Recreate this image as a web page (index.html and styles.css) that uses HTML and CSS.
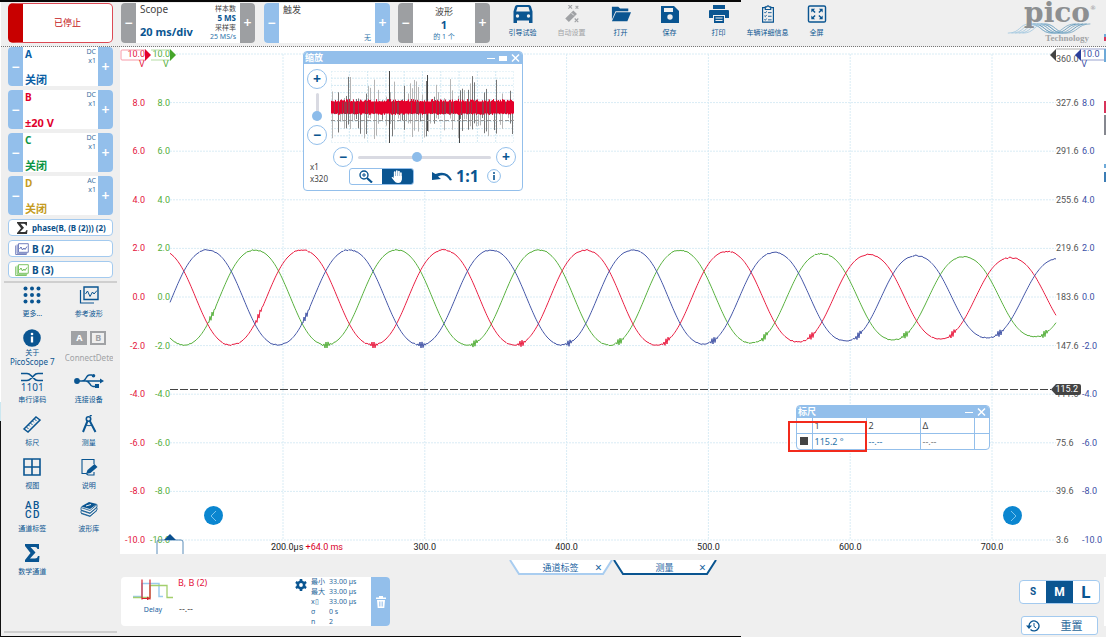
FILE: index.html
```html
<!DOCTYPE html>
<html lang="zh-CN">
<head>
<meta charset="utf-8">
<title>PicoScope 7</title>
<link rel="stylesheet" href="styles.css">
</head>
<body>
<div class="app">
  <header class="toolbar">
    <button class="run-state">已停止</button>
    <section class="stepper stepper-gray timebase">
      <button aria-label="减小时基">−</button>
      <div class="stepper-body split">
        <div class="col"><span class="cap">Scope</span><b class="big">20 ms/div</b></div>
        <div class="col samples"><span>样本数</span><b>5 MS</b><span>采样率</span><span class="blue">25 MS/s</span></div>
      </div>
      <button aria-label="增大时基">+</button>
    </section>
    <section class="stepper trigger">
      <button aria-label="上一触发">−</button>
      <div class="stepper-body col"><span class="cap cjk">触发</span><span class="note">无</span></div>
      <button aria-label="下一触发">+</button>
    </section>
    <section class="stepper stepper-gray waveform">
      <button aria-label="上一波形">−</button>
      <div class="stepper-body col center"><span class="cap cjk">波形</span><b class="big">1</b><span class="tiny">的 1 个</span></div>
      <button aria-label="下一波形">+</button>
    </section>
    <nav class="actions">
      <button class="tool"><svg viewBox="0 0 20 18"><path d="M4 0h12q1.500 0 2 1.500l1.500 5V18h-3.500v-2.500H4V18H.500V6.500L2 1.500Q2.500 0 4 0zM4.500 2 3.200 6.500h13.600L15.500 2z" fill="currentColor" fill-rule="evenodd"/><circle cx="4.500" cy="11" r="1.700" fill="#efefef"/><circle cx="15.500" cy="11" r="1.700" fill="#efefef"/></svg>引导试验</button>
      <button class="tool off"><svg viewBox="0 0 20 20"><path d="m2.500 15 9-9 4 4-9 9z" fill="currentColor"/><path d="m9.500 9 2.500 2.500" stroke="#efefef"/><path d="m6 0 4 4m0-4L6 4m8-3 3 3m0-3-3 3m-1 11 4 4m0-4-4 4" stroke="currentColor" stroke-width="1.200"/></svg>自动设置</button>
      <button class="tool"><svg viewBox="0 0 22 18"><path d="M1 1h7l2 2h9v3H5L1 15z" fill="currentColor"/><path d="M5.500 7H22l-4 10H1z" fill="currentColor"/></svg>打开</button>
      <button class="tool"><svg viewBox="0 0 18 18"><path d="M0 1h13l5 5v12H0z" fill="currentColor"/><path d="M3 3h9v4H3z" fill="#efefef"/><circle cx="9" cy="12" r="2.700" fill="#efefef"/></svg>保存</button>
      <button class="tool"><svg viewBox="0 0 20 18"><path d="M4 0h12v4H4zM1 5h18q1 0 1 1v7h-4v-3H4v3H0V6q0-1 1-1zM5 11h10v7H5z" fill="currentColor"/><path d="M6.500 13h7m-7 2.500h7" stroke="#efefef"/></svg>打印</button>
      <button class="tool"><svg viewBox="0 0 16 20"><path d="M5 3H2v16h12V3h-3M5 2h1.500q1.500-2 3 0H11v3H5z" fill="none" stroke="currentColor" stroke-width="1.300"/><path d="m4 8 1 1 1.500-2M4 12l1 1 1.500-2M4 16l1 1 1.500-2M8 8.500h4m-4 4h4m-4 4h4" fill="none" stroke="currentColor"/></svg>车辆详细信息</button>
      <button class="tool"><svg viewBox="0 0 20 19"><rect x="1" y="1" width="18" height="17" rx="1.500" fill="none" stroke="currentColor" stroke-width="1.500"/><path d="M4 4h4L4 8zm12 0v4l-4-4zM4 15v-4l4 4zm12 0h-4l4-4z" fill="currentColor"/><path d="m5 5 3 3m7-3-3 3M5 14l3-3m7 3-3-3" stroke="currentColor" stroke-width="1.500"/></svg>全屏</button>
    </nav>
    <div class="logo">
      <span class="logo-name">pico<sup>®</sup></span>
      <svg viewBox="0 0 92 12" fill="none" stroke-width="1" id="logo-waves"></svg>
      <span class="logo-sub">Technology</span>
    </div>
  </header>

  <aside class="sidebar">
    <section class="stepper channel ch-a"><button aria-label="A 减">−</button><div class="stepper-body split"><div class="col"><b>A</b><b class="range">关闭</b></div><div class="col coupling"><span>DC</span><span>x1</span></div></div><button aria-label="A 加">+</button></section>
    <section class="stepper channel ch-b"><button aria-label="B 减">−</button><div class="stepper-body split"><div class="col"><b>B</b><b class="range">±20 V</b></div><div class="col coupling"><span>DC</span><span>x1</span></div></div><button aria-label="B 加">+</button></section>
    <section class="stepper channel ch-c"><button aria-label="C 减">−</button><div class="stepper-body split"><div class="col"><b>C</b><b class="range">关闭</b></div><div class="col coupling"><span>DC</span><span>x1</span></div></div><button aria-label="C 加">+</button></section>
    <section class="stepper channel ch-d"><button aria-label="D 减">−</button><div class="stepper-body split"><div class="col"><b>D</b><b class="range">关闭</b></div><div class="col coupling"><span>AC</span><span>x1</span></div></div><button aria-label="D 加">+</button></section>
    <button class="pill pill-math"><svg viewBox="0 0 12 12"><path d="M1 0h10v3.500h-1Q9.500 1.800 8 1.800H4.500L8 5.800 4 10h4.500q1.500 0 2-2h1L11 12H1v-1l4-4.800L1 1z" fill="#333"/></svg>phase(B, (B (2))) (2)</button>
    <button class="pill"><svg class="violet" viewBox="0 0 14 12"><path d="M3.500.700h9.800v8.600H3.500zM.700 2.500v9h11M2.200 1.500v8.800h10" fill="none" stroke="currentColor" stroke-width=".9"/><path d="m4.500 6 1.500-2 1.500 3 1.500-2 1 1.500 2-3" fill="none" stroke="currentColor"/></svg>B (2)</button>
    <button class="pill"><svg class="lime" viewBox="0 0 14 12"><path d="M3.500.700h9.800v8.600H3.500zM.700 2.500v9h11M2.200 1.500v8.800h10" fill="none" stroke="currentColor" stroke-width=".9"/><path d="m4.500 6 1.500-2 1.500 3 1.500-2 1 1.500 2-3" fill="none" stroke="currentColor"/></svg>B (3)</button>
    <nav class="tools">
      <button class="tool"><svg viewBox="0 0 18 18"><g fill="currentColor"><circle cx="2.500" cy="2.500" r="2"/><circle cx="9" cy="2.500" r="2"/><circle cx="15.500" cy="2.500" r="2"/><circle cx="2.500" cy="9" r="2"/><circle cx="9" cy="9" r="2"/><circle cx="15.500" cy="9" r="2"/><circle cx="2.500" cy="15.500" r="2"/><circle cx="9" cy="15.500" r="2"/><circle cx="15.500" cy="15.500" r="2"/></g></svg>更多...</button>
      <button class="tool"><svg viewBox="0 0 20 18"><path d="M5 1h14v12.500H5z" fill="none" stroke="currentColor" stroke-width="1.400"/><path d="M1.500 4v13H15" fill="none" stroke="currentColor" stroke-width="1.200"/><path d="m6.500 8 2-3 2.500 5.500L13.500 6l1.500 2 3-3.500" fill="none" stroke="currentColor"/></svg>参考波形</button>
      <button class="tool about"><svg viewBox="0 0 18 18"><circle cx="9" cy="9" r="8.800" fill="currentColor"/><circle cx="9" cy="5" r="1.300" fill="#fff"/><path d="M9 7.500v6" stroke="#fff" stroke-width="2.300"/></svg>关于<span>PicoScope 7</span></button>
      <button class="tool off connect"><span class="ab"><i>A</i><i>B</i></span><span class="connect-name">ConnectDetect</span></button>
      <button class="tool decode"><svg viewBox="0 0 22 9"><path d="M0 1h6q2 0 4 2l3 3q1.500 2 4 2h5M0 8h6q2 0 4-2l3-3q1.500-2 4-2h5" fill="none" stroke="currentColor" stroke-width="1.700"/></svg><span class="code">1101</span>串行译码</button>
      <button class="tool"><svg class="wide" viewBox="0 0 30 14"><circle cx="3" cy="7" r="2.900" fill="currentColor"/><path d="M4 7h23M8 7q2.500 0 4-3t3.500-3H18M12 7q2 0 4 3 1 2.500 3 2.500h3" fill="none" stroke="currentColor" stroke-width="1.400"/><circle cx="19.500" cy="1.800" r="1.800" fill="currentColor"/><path d="M21 10h4v4h-4zM26 4.500 30 7l-4 2.500z" fill="currentColor"/></svg>连接设备</button>
      <button class="tool"><svg viewBox="0 0 18 18"><path d="m1 14 12-12 4 3L5 17z" fill="none" stroke="currentColor" stroke-width="1.500"/><path d="m11.500 4 2 2M9.500 6l1.300 1.300M7.500 8l2 2M5.500 10l1.300 1.300M3.500 12l2 2" stroke="currentColor"/></svg>标尺</button>
      <button class="tool"><svg viewBox="0 0 18 18"><circle cx="8.500" cy="4" r="2.200" fill="none" stroke="currentColor" stroke-width="1.600"/><path d="M10 1 11.500 0M7.500 6 3 17M9.800 6 15.500 17" stroke="currentColor" stroke-width="2"/><path d="M6 10q3 1.500 6 0" fill="none" stroke="currentColor"/></svg>测量</button>
      <button class="tool"><svg viewBox="0 0 18 18"><path d="M1 1h16v16H1zM9 1v16M1 9h16" fill="none" stroke="currentColor" stroke-width="1.600"/></svg>视图</button>
      <button class="tool"><svg viewBox="0 0 18 18"><path d="M14 6V1.500H2v14h4l2 1.500h6v-3" fill="none" stroke="currentColor" stroke-width="1.100"/><path d="m6 16 1.500-4 7-6 3 3-7 6z" fill="currentColor"/></svg>说明</button>
      <button class="tool labels"><span class="letters"><i>A</i><i>B</i><i>C</i><i>D</i></span>通道标签</button>
      <button class="tool"><svg viewBox="0 0 18 18"><path d="M1 5.500 9 1l8 2-7 5z" fill="currentColor"/><path d="m1 6.500 9 3 7-6v2.500l-7 6-9-3zm0 3 9 3 7-6v2.500l-7 6-9-3zm0 3 9 3 7-6" fill="none" stroke="currentColor" stroke-width=".8"/><path d="m6 5 5-1.500" stroke="#efefef"/></svg>波形库</button>
      <button class="tool"><svg viewBox="0 0 18 18"><path d="M2 0h14v5h-1.500Q14 3 12 3H7.500l5 5.500-5.500 6h5q2.500 0 3-2.500H16.500L16 18H2v-2l5.500-7L2 2z" fill="currentColor"/></svg>数学通道</button>
    </nav>
  </aside>

  <main class="scope">
    <div class="axis axis-red"><span>10.0</span><span>8.0</span><span>6.0</span><span>4.0</span><span>2.0</span><span>0.0</span><span>-2.0</span><span>-4.0</span><span>-6.0</span><span>-8.0</span><span>-10.0</span></div>
    <div class="axis axis-green"><span>10.0</span><span>8.0</span><span>6.0</span><span>4.0</span><span>2.0</span><span>0.0</span><span>-2.0</span><span>-4.0</span><span>-6.0</span><span>-8.0</span><span>-10.0</span></div>
    <svg class="plot" viewBox="0 0 886 486" preserveAspectRatio="none" id="plot"></svg>
    <div class="axis axis-gray"><span class="clamped">360.0</span><span>327.6</span><span>291.6</span><span>255.6</span><span>219.6</span><span>183.6</span><span>147.6</span><span>111.6</span><span>75.6</span><span>39.6</span><span>3.6</span></div>
    <div class="axis axis-blue"><span>10.0</span><span>8.0</span><span>6.0</span><span>4.0</span><span>2.0</span><span>0.0</span><span>-2.0</span><span>-4.0</span><span>-6.0</span><span>-8.0</span><span>-10.0</span></div>
    <div class="time-axis"><span class="origin">200.0μs <em>+64.0 ms</em></span><span>300.0</span><span>400.0</span><span>500.0</span><span>600.0</span><span>700.0</span></div>

    <svg class="flags-left" viewBox="0 0 56 20"><path d="M25 2H2Q1 2 1 3v8q0 1 1 1h23" fill="none" stroke="#f79aa8"/><path d="M31 2h19M31 12h19" fill="none" stroke="#b5dda5"/><path d="m25 1 6 6-6 6z" fill="#e4002b"/><path d="m50 1 6 6-6 6z" fill="#45a52a"/></svg>
    <span class="unit unit-red">V</span><span class="unit unit-green">V</span>
    <svg class="flags-right" viewBox="0 0 56 14"><path d="M6 1h25" fill="none" stroke="#aaa"/><path d="M31 1h25M31 12h25" fill="none" stroke="#9aa3cf"/><path d="M6 1v12L0 7z" fill="#444"/><path d="M31 1v12l-6-6z" fill="#2b3f9b"/></svg>
    <span class="unit unit-blue">V</span>
    <span class="ruler-tag">115.2</span>
    <svg class="trigger-mark" viewBox="0 0 28 20"><path d="M1 20V8q0-2 2-2h22q2 0 2 2v12" fill="none" stroke="#5b8db9"/><path d="m14 0 6 6H8z" fill="#0a4f8f"/></svg>
    <button class="page-btn prev" aria-label="向左"><svg viewBox="0 0 10 12"><path d="M7 1 2 6l5 5" fill="none" stroke="#7cc4ee"/></svg></button>
    <button class="page-btn next" aria-label="向右"><svg viewBox="0 0 10 12"><path d="m3 1 5 5-5 5" fill="none" stroke="#7cc4ee"/></svg></button>

    <section class="window zoom-window">
      <header><b>缩放</b><svg viewBox="0 0 34 10"><path d="M1 5.500h8" stroke="#fff"/><path d="M13 3h8v5h-8z" fill="#fff"/><path d="m26 1.500 7 7m0-7-7 7" stroke="#fff" stroke-width="1.500"/></svg></header>
      <div class="zoom-body">
        <div class="vzoom"><button class="round" aria-label="垂直放大">+</button><input type="range" class="range-v" min="0" max="100" value="0" aria-label="垂直缩放"><button class="round" aria-label="垂直缩小">−</button></div>
        <svg class="overview" viewBox="0 0 183 72" preserveAspectRatio="none" id="overview"></svg>
        <div class="factors"><span>x1</span><span>x320</span></div>
        <div class="hzoom"><button class="round" aria-label="水平缩小">−</button><input type="range" class="range-h" min="0" max="100" value="44" aria-label="水平缩放"><button class="round" aria-label="水平放大">+</button></div>
        <div class="zoom-tools">
          <div class="segmented"><button aria-label="放大镜"><svg viewBox="0 0 14 13"><circle cx="5" cy="5" r="4" fill="none" stroke="#0a5591" stroke-width="1.400"/><path d="M3 5h4M5 3v4" stroke="#0a5591"/><path d="m8 8 5 4.500" stroke="#0a5591" stroke-width="2.200"/></svg></button><button class="on" aria-label="平移"><svg viewBox="0 0 13 13"><path d="M4.200 2v5m2.100-6v6m2.100-5.500V7m2-4v6" stroke="#fff" stroke-width="1.700" stroke-linecap="round"/><path d="M3.300 6h8v3.500Q11 13 7.500 13 5 13 3.800 11L1 7.500q1-1.300 2.300.5z" fill="#fff"/></svg></button></div>
          <button class="bare" aria-label="撤消"><svg class="undo" viewBox="0 0 20 10"><path d="M0 1v8l9-1-3-2.500q7-4 12 4L20 9Q15-1.500 3.500 3z" fill="#0a5591"/></svg></button>
          <button class="bare ratio">1:1</button>
          <button class="bare" aria-label="信息"><svg class="info" viewBox="0 0 14 14"><circle cx="7" cy="7" r="6.400" fill="#fff" stroke="#8dbdea"/><circle cx="7" cy="4" r="1" fill="#0a5591"/><path d="M7 6v5" stroke="#0a5591" stroke-width="1.600"/></svg></button>
        </div>
      </div>
    </section>

    <section class="window ruler-window">
      <header><b>标尺</b><svg viewBox="0 0 22 10"><path d="M0 5.500h8" stroke="#fff"/><path d="m13 1.500 7 7m0-7-7 7" stroke="#fff" stroke-width="1.500"/></svg></header>
      <table>
        <colgroup><col class="c-key"><col class="c-val"><col class="c-val"><col class="c-val"><col class="c-key"></colgroup>
        <tr><th></th><th>1</th><th>2</th><th>Δ</th><th></th></tr>
        <tr><td><span class="swatch"></span></td><td>115.2 °</td><td>--.--</td><td class="dim">--.--</td><td></td></tr>
      </table>
    </section>
    <div class="callout"></div>
  </main>

  <footer class="bottom">
    <div class="tabs">
      <div class="tab"><svg viewBox="0 0 104 16" preserveAspectRatio="none"><path d="M1 0 10 14h84l9-14" fill="#fff" stroke="#a9cdf0" stroke-width="2"/></svg><button>通道标签</button><button class="close" aria-label="关闭通道标签">×</button></div>
      <div class="tab"><svg viewBox="0 0 104 16" preserveAspectRatio="none"><path d="M1 0 10 14h84l9-14" fill="#fff" stroke="#0a5591" stroke-width="2"/></svg><button>测量</button><button class="close" aria-label="关闭测量">×</button></div>
    </div>
    <div class="bottom-row">
      <section class="measure">
        <div class="kind"><svg viewBox="0 0 40 20"><path d="M0 17h9V4h17v13h4" fill="none" stroke="#9dcbee" stroke-width="1.500"/><path d="M0 18h17V6h17v12h6" fill="none" stroke="#a3cf6d" stroke-width="1.300"/><path d="M9 0v20M17 0v20M9 19h8" stroke="#d8232f" stroke-width="1.200"/><path d="m14 17 3 2-3 2z" fill="#d8232f"/></svg><span>Delay</span></div>
        <div class="reading"><span class="src">B, B (2)</span><span class="val">--.--</span></div>
        <button class="bare gear" aria-label="设置"><svg viewBox="0 0 14 14"><circle cx="7" cy="7" r="3.700" fill="none" stroke="#0a5591" stroke-width="3"/><path d="M7 0v3M7 11v3M1 3.500l2.500 1.500M10.500 9 13 10.500M1 10.500 3.500 9M10.500 5 13 3.500" stroke="#0a5591" stroke-width="3"/></svg></button>
        <dl class="stats"><dt>最小</dt><dd>33.00 µs</dd><dt>最大</dt><dd>33.00 µs</dd><dt>x▯</dt><dd>33.00 µs</dd><dt>σ</dt><dd>0 s</dd><dt>n</dt><dd>2</dd></dl>
        <button class="trash" aria-label="删除"><svg viewBox="0 0 10 12"><path d="M0 1.500h3V0h4v1.500h3V3H0zM1 4h8l-.7 8H1.700z" fill="#fff"/><path d="M3.500 5.500v5M5 5.500v5m1.500-5v5" stroke="#93bfeb" stroke-width=".7"/></svg></button>
      </section>
      <div class="view-size">
        <div class="sizes"><button>S</button><button class="on">M</button><button>L</button></div>
        <button class="reset"><svg viewBox="0 0 14 12"><path d="M3 6a5 5 0 1 1 1.500 3.500" fill="none" stroke="#0a5591" stroke-width="1.300"/><path d="M0 5.500h6L3 9z" fill="#0a5591"/><path d="M8 3v3.500l2.200 1.500" fill="none" stroke="#0a5591"/></svg><span>重置</span></button>
      </div>
    </div>
  </footer>
  <div class="edge edge-top"></div>
  <div class="edge edge-bottom"></div>
  <div class="edge edge-left"></div>
  <svg class="edge edge-right" viewBox="0 0 2 637" preserveAspectRatio="none"><path d="M1 34v3m0 12v13m0 102v4" stroke="#6eaad8" stroke-width="2"/><path d="M1 37v4m0 60v12" stroke="#d8335a" stroke-width="2"/><path d="M1 115v20" stroke="#85878f" stroke-width="2"/><path d="M1 172v10" stroke="#3c7db5" stroke-width="2"/><path d="M1 577v49" stroke="#fff" stroke-width="2"/></svg>
</div>
<script src="traces.js"></script>
</body>
</html>
```
FILE: styles.css
```css
* { box-sizing: border-box; }
body { margin: 0; background: #efefef; color: #444; font: 9px/12px "Noto Sans", "Noto Sans CJK SC", sans-serif; }
button { margin: 0; padding: 0; border: 0; background: none; color: inherit; font: inherit; }
svg { display: block; }
i { font-style: normal; }

.app { position: relative; min-height: 100vh; display: grid; grid-template: 47px 1fr 83px / 120px 1fr; }

/* toolbar */
.toolbar { grid-column: 1 / -1; display: flex; align-items: stretch; padding: 3px 10px 3px 8px; border-bottom: 1px dotted #777; }
.run-state { width: 105px; border: 1px solid #dc4a55; border-left: 15px solid #c80000; border-radius: 5px; background: #fff; color: #c41420; }
.stepper { display: flex; height: 40px; border-radius: 4px; overflow: hidden; background: #fff; }
.stepper > button { flex: none; width: 15px; background: #93bfeb; color: #fff; font-size: 14px; font-weight: 600; }
.stepper-gray > button { background: #9d9fa2; }
.stepper-body { flex: 1; min-width: 0; padding: 0 4px; }
.split { display: flex; justify-content: space-between; }
.col { display: flex; flex-direction: column; justify-content: space-between; white-space: nowrap; }
.timebase { width: 134px; margin-left: 8px; }
.timebase .col { padding-bottom: 4px; }
.cap { font-size: 10px; line-height: 13px; }
.cap.cjk { font-size: 9px; }
.big { color: #0a5591; font-size: 11px; line-height: 14px; }
.stepper .samples { font-size: 7px; line-height: 9px; text-align: right; padding-top: 1px; padding-bottom: 2px; }
.samples b { color: #0a5591; font-size: 8px; }
.blue, .note, .tiny { color: #2f75ab; }
.trigger { width: 126px; margin-left: 9px; }
.note { align-self: flex-end; font-size: 7px; line-height: 11px; }
.waveform { width: 92px; margin-left: 8px; }
.waveform .stepper-body { padding: 2px 0 1px; }
.center { text-align: center; }
.waveform .big { line-height: 12px; }
.tiny { font-size: 7px; line-height: 11px; }
.actions { display: flex; margin-left: 8px; }
.tool { display: flex; flex-direction: column; align-items: center; gap: 5px; color: #0a5591; font-size: 7px; line-height: 10px; white-space: nowrap; }
.tool svg { height: 18px; width: 20px; }
.actions .tool { width: 49px; padding-top: 2px; }
.tool.off { color: #a0a2a5; }
.logo { width: 92px; margin-left: auto; display: flex; flex-direction: column; align-items: flex-end; }
.logo-name { position: relative; height: 20px; padding-right: 6px; color: #8d8f91; font: bold 28px/20px "DejaVu Serif", serif; }
.logo-name sup { position: absolute; right: 0; top: 0; font-size: 6px; line-height: 10px; font-weight: normal; }
.logo svg { width: 92px; height: 12px; }
.logo-sub { padding-right: 7px; color: #a2a4a6; font: bold 9px/9px "Liberation Serif", serif; }

/* sidebar */
.sidebar { grid-row: 2 / 4; display: flex; flex-direction: column; gap: 4px; padding: 0 7px 4px 8px; }
.channel { height: 39px; }
.channel .stepper-body { padding: 0 2px; }
.channel b { font-size: 10px; line-height: 14px; }
.channel .range { font-size: 11px; line-height: 13px; }
.coupling { color: #41729f; font-size: 7px; }
.stepper .coupling { justify-content: flex-start; line-height: 9px; text-align: right; }
.ch-a { color: #0a5ea5; }
.ch-b { color: #e0002c; }
.ch-c { color: #0b9444; }
.ch-d { color: #c59b22; }
.pill { display: flex; align-items: center; gap: 3px; height: 17px; padding-left: 6px; border: 1px solid #a3caef; border-radius: 4px; background: #fff; color: #0a4f87; font-size: 10px; font-weight: bold; white-space: nowrap; }
.pill svg { width: 14px; height: 12px; }
.pill-math { font-size: 8px; }
.violet { color: #6574b8; }
.lime { color: #6fbe57; }
.tools { flex: 1; display: grid; grid-template-columns: 1fr 1fr; grid-auto-rows: 43px; align-content: start; margin: -1px -4px 0; padding-top: 3px; border-top: 2px solid #cfcfcf; border-bottom: 2px solid #cfcfcf; }
.tools .tool { justify-content: flex-start; height: 43px; min-width: 0; }
.tools .tool svg { flex: none; }
.tools .about { gap: 0; line-height: 9px; }
.about svg { margin-bottom: 1px; }
.about span { font-size: 8px; }
.tools .connect { gap: 8px; font-size: 8px; }
.connect-name { width: 48px; overflow: hidden; text-align: left; }
.ab { display: flex; gap: 3px; padding-top: 2px; }
.ab i { width: 16px; height: 14px; border: 2px solid #a0a2a5; font: bold 9px/10px "Noto Sans", sans-serif; }
.ab i:first-child { background: #a0a2a5; color: #fff; }
.tools .decode { gap: 0; }
.tools .decode svg { width: 22px; height: 10px; }
.code { font: 10px/10px "Noto Sans", sans-serif; margin-bottom: 3px; }
.tools .wide { width: 30px; }
.letters { display: grid; grid-template-columns: 8px 8px; font: 500 10px/9px Roboto, sans-serif; }

/* plot */
.scope { position: relative; display: grid; grid-template: minmax(0, 1fr) 14px / 25px 25px minmax(0, 1fr) 25px 25px; padding-top: 7px; background: #fff; font-family: Roboto, sans-serif; }
.axis { display: flex; flex-direction: column; justify-content: space-between; margin: -6px 0; line-height: 12px; white-space: nowrap; }
.axis-red, .axis-green { align-items: flex-end; }
.axis-red { color: #e4143c; }
.axis-green { color: #52ae3a; }
.axis-gray { color: #555; }
.axis-blue { color: #3c4fa6; padding-left: 1px; }
.axis-gray .clamped { height: 12px; line-height: 22px; }
.plot { width: 100%; height: 100%; min-height: 0; overflow: visible; }
.plot path { fill: none; vector-effect: non-scaling-stroke; }
.time-axis { grid-column: 3 / 5; display: grid; grid-template-columns: 42fr repeat(6, 142fr); margin-right: 18px; text-align: center; color: #222; line-height: 14px; }
.time-axis .origin { grid-column: 2; padding-left: 59px; text-align: left; white-space: nowrap; }
.time-axis em { color: #d9001f; font-style: normal; }
.flags-left, .flags-right, .unit, .ruler-tag, .trigger-mark, .page-btn, .window, .callout { position: absolute; }
.flags-left { left: 0; top: 1px; width: 56px; height: 20px; }
.flags-right { right: 0; top: 1px; width: 56px; height: 14px; }
.unit { top: 12px; line-height: 10px; }
.unit-red { left: 19px; color: #e4143c; }
.unit-green { left: 43px; color: #52ae3a; }
.unit-blue { right: 19px; color: #3c4fa6; }
.ruler-tag { right: 25px; bottom: 159px; width: 30px; padding-right: 3px; background: #444; color: #fff; line-height: 11px; text-align: right; border-radius: 2px; clip-path: polygon(0 50%, 5px 0, 100% 0, 100% 100%, 5px 100%); }
.trigger-mark { left: 36px; bottom: 0; width: 28px; height: 20px; }
.page-btn { bottom: 29px; width: 19px; height: 19px; border-radius: 50%; background: #0b86d0; }
.page-btn svg { width: 10px; height: 12px; margin: auto; }
.prev { left: 84px; }
.next { right: 84px; }

/* floating windows */
.window { border: 1px solid #93bfeb; border-radius: 4px; overflow: hidden; background: #fff; font-family: "Noto Sans", "Noto Sans CJK SC", sans-serif; }
.window header { display: flex; align-items: center; justify-content: space-between; height: 12px; padding: 0 2px 0 1px; background: #93bfeb; color: #fff; }
.window header svg { height: 10px; }
.zoom-window { left: 183px; top: 4px; width: 220px; }
.zoom-body { display: grid; grid-template-columns: 20px minmax(0, 1fr); column-gap: 4px; padding: 5px 8px 5px 3px; }
.vzoom { display: flex; flex-direction: column; align-items: center; justify-content: space-between; height: 76px; }
.round { flex: none; width: 20px; height: 20px; border: 1px solid #93bfeb; border-radius: 50%; background: #fff; color: #0a5591; font-size: 14px; line-height: 16px; font-weight: bold; }
.overview { width: 100%; height: 72px; margin-top: 2px; }
.factors { grid-row: 2 / 4; align-self: end; display: flex; flex-direction: column; padding-left: 3px; font-size: 8px; white-space: nowrap; }
.hzoom { display: flex; align-items: center; gap: 5px; margin: 2px -2px 0 2px; }
input[type="range"] { appearance: none; margin: 0; background: #d9dae2; border-radius: 2px; }
input[type="range"]::-webkit-slider-thumb { appearance: none; width: 10px; height: 10px; border-radius: 50%; background: #8dbcea; }
.range-h { flex: 1; min-width: 0; height: 3px; }
.range-v { writing-mode: vertical-lr; direction: rtl; width: 3px; height: 28px; }
.zoom-tools { display: flex; align-items: center; height: 18px; padding-left: 18px; }
.segmented { display: flex; width: 65px; height: 17px; margin-right: 18px; border: 1px solid #93bfeb; border-radius: 3px; overflow: hidden; }
.segmented button { flex: 1; }
.segmented svg { width: 14px; height: 13px; margin: auto; }
.on { background: #0a5591; color: #fff; }
.undo { width: 20px; height: 10px; }
.ratio { margin: 0 8px 0 4px; color: #0a5591; font-size: 16px; font-weight: bold; line-height: 18px; }
.info { width: 14px; height: 14px; }
.ruler-window { right: 116px; bottom: 104px; width: 194px; }
.ruler-window table { width: 100%; table-layout: fixed; border-collapse: collapse; }
.c-key { width: 15px; }
.ruler-window th, .ruler-window td { height: 15px; padding: 0 2px; border: 1px solid #93bfeb; font-weight: normal; text-align: left; line-height: 13px; }
.ruler-window tr > :first-child { border-left: 0; }
.ruler-window tr > :last-child { border-right: 0; }
.ruler-window tr:first-child > * { border-top: 0; }
.ruler-window tr:last-child > * { border-bottom: 0; height: 16px; }
.ruler-window td { color: #2872a8; }
.ruler-window .dim { color: #777; }
.swatch { display: block; width: 8px; height: 8px; margin-left: 1px; background: #444; }
.callout { right: 239px; bottom: 102px; width: 79px; height: 31px; border: 2px solid #f22a1c; }

/* bottom */
.bottom { grid-column: 2; display: flex; flex-direction: column; gap: 2px; padding: 6px 6px 1px 1px; }
.tabs { display: flex; justify-content: center; height: 16px; padding-left: 4px; }
.tab { position: relative; display: grid; grid-template-columns: 1fr 28px; width: 104px; color: #1b649f; line-height: 13px; }
.tab svg { position: absolute; inset: 0; width: 100%; height: 100%; }
.tab button { position: relative; padding-left: 28px; height: 14px; }
.tab .close { padding: 0; font-size: 12px; }
.bottom-row { display: flex; justify-content: space-between; align-items: flex-start; }
.measure { display: flex; width: 269px; height: 49px; margin-top: -1px; border-radius: 4px; background: #fff; overflow: hidden; }
.kind { display: flex; flex-direction: column; align-items: center; gap: 4px; width: 40px; margin: 2px 0 0 12px; color: #1b649f; font-size: 7px; }
.kind svg { width: 40px; height: 21px; }
.reading { display: flex; flex-direction: column; justify-content: space-between; width: 122px; padding-left: 5px; padding-bottom: 11px; }
.src { color: #e4143c; }
.val { padding-left: 1px; }
.gear { align-self: flex-start; padding-top: 2px; }
.gear svg { width: 12px; height: 12px; }
.stats { flex: 1; display: grid; grid-template-columns: 18px 1fr; grid-auto-rows: 10px; margin: 0 0 0 4px; color: #2a689b; font-size: 7px; line-height: 10px; white-space: nowrap; }
.stats dd { margin: 0; }
.trash { width: 19px; background: #93bfeb; }
.trash svg { width: 10px; height: 12px; margin: auto; }
.view-size { display: flex; flex-direction: column; align-items: center; gap: 12px; margin-top: 2px; }
.sizes { display: flex; width: 81px; height: 24px; border: 1px solid #a3caef; border-radius: 4px; overflow: hidden; background: #fff; color: #0a5591; font: bold 12px/22px Roboto, sans-serif; }
.sizes button { flex: 1; }
.sizes button:first-child { font-size: 10px; }
.sizes button:last-child { font-size: 17px; }
.sizes .on { background: #0a5591; color: #fff; }
.reset { display: flex; align-items: center; width: 77px; height: 19px; padding-left: 4px; border: 1px solid #a3caef; border-radius: 3px; background: #fff; color: #2a689b; font-size: 11px; }
.reset svg { width: 14px; height: 12px; }
.reset span { flex: 1; padding-left: 6px; }

/* slivers of the desktop round the window */
.edge { position: absolute; }
.edge-top { left: 0; top: 0; width: 67%; height: 2px; background: #080808; }
.edge-bottom { left: 0; bottom: 0; width: 67%; height: 1px; background: #080808; }
.edge-left { left: 0; top: 2px; bottom: 0; width: 1px; background: linear-gradient(#fff 63%, #cbe7f0 63% 66%, #111 66%); }
.edge-right { right: 0; top: 0; width: 2px; height: 100%; }
```
FILE: traces.js
```js
const NS = "http://www.w3.org/2000/svg";
const plot = document.getElementById("plot");
const overview = document.getElementById("overview");
const waves = document.getElementById("logo-waves");

function path(parent, d, stroke, width, dash) {
  const p = document.createElementNS(NS, "path");
  p.setAttribute("d", d);
  p.setAttribute("stroke", stroke);
  p.setAttribute("stroke-width", width);
  p.setAttribute("fill", "none");
  if (dash) p.setAttribute("stroke-dasharray", dash);
  parent.appendChild(p);
}

let seed = 7;
function rnd() {
  seed = (seed * 16807) % 2147483647;
  return seed / 2147483647;
}

// graticule
const STEP = 48.6, PERIOD = 141.8;
let grid = "";
for (let i = 0; i <= 10; i++) grid += `M0 ${i * STEP}H886`;
for (let i = 0; i < 6; i++) grid += `M${113 + i * PERIOD} 0V486`;
path(plot, grid, "#d9ecf5", 1, "2 1");

// three phases, each with a small ignition glitch near its trough
const glitchAt = [27, 1, 7, 10, 13, 12, 10];
function phase(peak, color) {
  let d = "";
  for (let x = 0; x <= 886; x++) {
    const amp = x < 490 ? 47.5 : 47.5 - (x - 490) * 0.022;
    const c = Math.cos((x - peak) / PERIOD * 2 * Math.PI);
    let y = 243.500 - amp * (c - 0.035 * Math.cos((x - peak) / PERIOD * 6 * Math.PI)) / 0.965;
    const n = Math.floor((x - peak + 14) / PERIOD + 0.001);
    const trough = peak + (n + 0.5) * PERIOD;
    const g = glitchAt[Math.max(0, Math.min(6, n))];
    const off = Math.abs(x - trough - g);
    if (off < 4 && n >= 0) y += (x % 2 ? 1 : -1) * (off < 2 ? 3 : 1);
    else if (Math.abs(c) > 0.93) y += (rnd() - 0.5) * 1.2;
    d += (x ? "L" : "M") + x + " " + y.toFixed(1);
  }
  path(plot, d, color, 1);
}
phase(85 - PERIOD, "#58b13e");
phase(132 - PERIOD, "#ea1f43");
phase(37.500, "#4557a8");
path(plot, "M0 335.500H881", "#444", 1, "8 2");

// buffer overview
let og = "";
for (let i = 0; i <= 10; i++) og += `M${i * 18.3} 0V72M0 ${i * 7.2}H183`;
path(overview, og, "#d3e9f3", 1, "2 1");
let up = "", light = "";
for (let x = 1; x < 183; x += 2) {
  const a = 30 - Math.pow(rnd(), 2) * 27;
  const b = 47 + Math.pow(rnd(), 1.5) * 21;
  if (rnd() > 0.7) up += `M${x}.5 ${a}V${b}`;
  else if (rnd() > 0.2) light += `M${x}.5 ${a + 2}V${b}`;
}
path(overview, light, "#b5b5b5", 1);
path(overview, up, "#777", 1);
path(overview, "M58.500 0V72M96.500 4V60M128.500 40V72", "#444", 1);
path(overview, "M0 36.500H183", "#e4002b", 12);
let red = "", dark = "";
for (let x = 0.5; x < 183; x += 1) {
  red += `M${x} ${28 + rnd() * 4}V${41 + rnd() * 3}`;
  if (rnd() > 0.8) dark += `M${x} 31V43`;
}
path(overview, red, "#e4002b", 1);
path(overview, dark, "#9c3345", 1);
path(overview, "M0 49.500H183", "#999", 1, "4 2");

// logo ribbons
for (let i = 0; i < 5; i++) {
  const o = i * 4;
  path(waves, `M${o} 11C${14 + o} 11 ${12 + o} 1 ${24 + o} 1S${36 + o} 11 ${48 + o} 11`, "#a9cbe0", 1);
  path(waves, `M${24 + o} 1C${36 + o} 1 ${36 + o} 11 ${48 + o} 11S${60 + o} 1 ${74 + o} 1`, i % 2 ? "#5f96b8" : "#86aec6", 1);
}
```
